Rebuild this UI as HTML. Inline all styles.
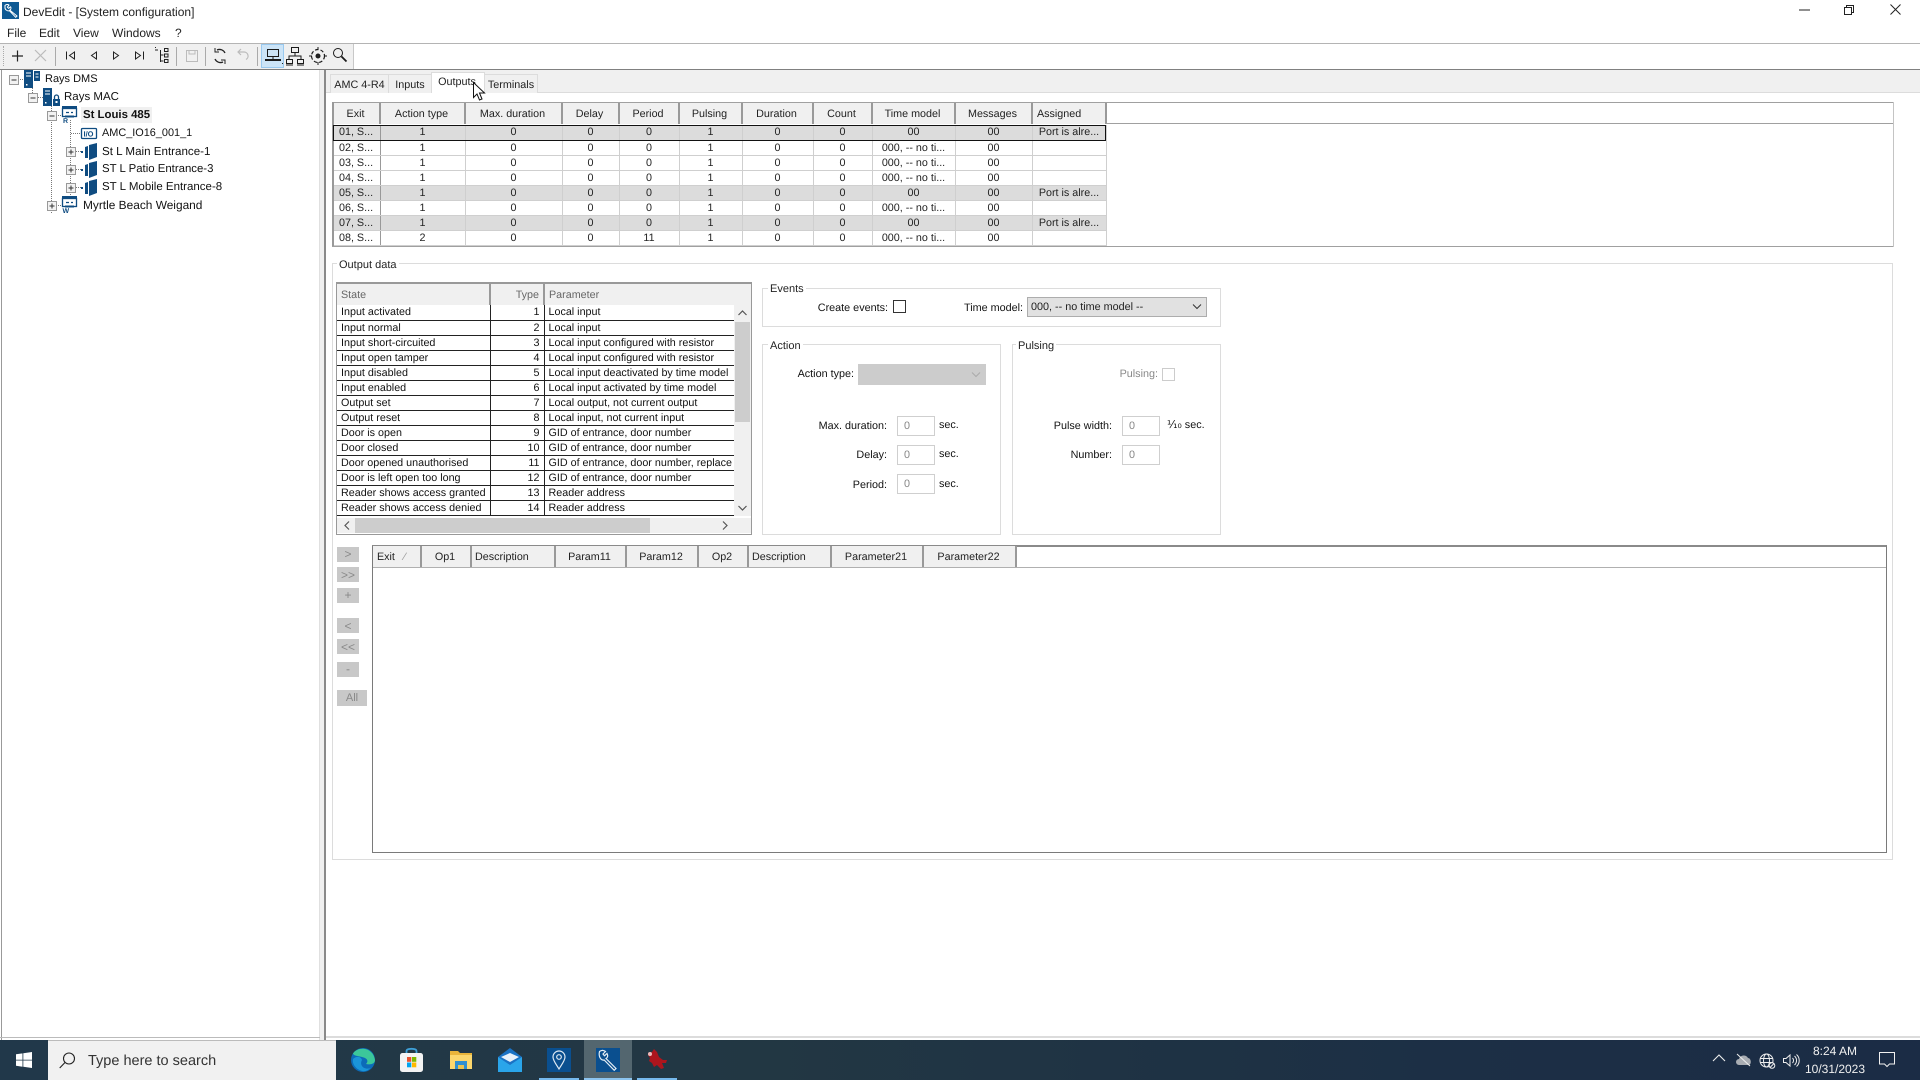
<!DOCTYPE html>
<html><head><meta charset="utf-8"><title>DevEdit</title>
<style>
html,body{margin:0;padding:0;width:1920px;height:1080px;overflow:hidden;background:#fff}
body{position:relative;font-family:"Liberation Sans",sans-serif;font-size:10.8px;color:#111;text-rendering:geometricPrecision}
.a{position:absolute}
.t{position:absolute;white-space:nowrap;line-height:15px}
.r{text-align:right}
svg{position:absolute;overflow:visible}
table{border-collapse:collapse;table-layout:fixed;position:absolute;font-size:10.75px}
td,th{padding:0;overflow:hidden;white-space:nowrap;font-weight:normal;box-sizing:border-box}
#top th{height:21px;background:#f0f0f0;border-right:2px solid #999;text-align:center;color:#222;padding-right:2px}
#top td{height:15px;line-height:14px;text-align:center;border-right:1px solid #cfcfcf;border-bottom:1px solid #cfcfcf;color:#222}
#top tr.g td{background:#dcdcdc}
#top td:first-child{text-align:left;padding-left:5px;border-right:1px solid #999}
#st th{height:21px;background:#f0f0f0;color:#666;text-align:left;padding-left:4px;border-right:2px solid #999}
#st td{height:15px;line-height:14px;border-bottom:1px solid #222;border-right:1px solid #222;padding-left:4px;color:#111}
#st td:nth-child(2){text-align:right;padding:0 4px 0 0}
#bt th{height:21px;background:#f0f0f0;border-right:2px solid #999;text-align:center;color:#222;padding-right:2px}
.gb{position:absolute;border:1px solid #dcdcdc;box-sizing:border-box}
.lg{position:absolute;background:#fff;padding:0 2px;line-height:14px;color:#222;white-space:nowrap}
.inp{position:absolute;width:38px;height:20px;border:1px solid #cfcfcf;box-sizing:border-box;background:#fff;color:#888;line-height:18px;padding-left:6px}
.btn{position:absolute;background:#c8c8c8;color:#888;text-align:center;line-height:15px;font-size:12px}
.tab{position:absolute;top:74px;height:19px;background:#f0f0f0;border:1px solid #dcdcdc;border-bottom:none;box-sizing:border-box;text-align:center;line-height:20px;color:#222}
.tb{color:#111}
</style></head><body>

<!-- title bar -->
<svg style="left:2px;top:2px" width="17" height="17" viewBox="0 0 17 17"><rect width="17" height="17" fill="#0f5a94"/><path d="M3 3.500c1-1.200 3-1.300 4-.4l-1.600 2 1.200 1.200 2-1.500c.7 1.200.4 2.700-.8 3.400L15 14l-1.300 1.300-6.200-6.500c-1.900.5-4.400-1-4.500-3z" fill="none" stroke="#fff" stroke-width="1"/></svg>
<div class="t" style="left:23px;top:4px;font-size:12px;color:#222;line-height:16px">DevEdit - [System configuration]</div>
<svg style="left:1799px;top:9px" width="12" height="2"><rect width="11" height="1" y="0.5" fill="#222"/></svg>
<svg style="left:1844px;top:5px" width="12" height="12" fill="none" stroke="#222"><rect x="0.5" y="2.500" width="7" height="7" fill="#fff"/><path d="M2.500 2.500v-2h7v7h-2"/></svg>
<svg style="left:1890px;top:4px" width="12" height="12" stroke="#222"><path d="M.5.5l10 10M10.500.5l-10 10"/></svg>
<div class="t" style="left:7px;top:26px;font-size:12px;color:#222">File</div>
<div class="t" style="left:39px;top:26px;font-size:12px;color:#222">Edit</div>
<div class="t" style="left:73px;top:26px;font-size:12px;color:#222">View</div>
<div class="t" style="left:112px;top:26px;font-size:12px;color:#222">Windows</div>
<div class="t" style="left:175px;top:26px;font-size:12px;color:#222">?</div>

<!-- toolbar -->
<div class="a" style="left:0;top:43px;width:1920px;height:1px;background:#b4b4b4"></div>
<div class="a" style="left:0;top:44px;width:353px;height:25px;background:#f0f0f0"></div>
<div class="a" style="left:353px;top:44px;width:1px;height:25px;background:#c8c8c8"></div>
<div class="a" style="left:0;top:69px;width:1920px;height:1px;background:#808080"></div>
<div class="a" style="left:3px;top:46px;width:1px;height:20px;border-left:1px dotted #aaa"></div>
<svg style="left:0;top:44px" width="353" height="25" fill="none" stroke="#222" stroke-width="1">
 <path d="M17.500 6.500v11M12 12h11" stroke-width="1.200"/>
 <path d="M35 6l11 11M46 6L35 17" stroke="#bbb" stroke-width="1.200"/>
 <path d="M55.500 3v19" stroke="#aaa"/>
 <path d="M66.500 7.500v8M74.500 8l-5 3.500 5 3.500z" stroke-width="1"/>
 <path d="M96.500 8l-5 3.500 5 3.500z" stroke-width="1"/>
 <path d="M113.500 8l5 3.500-5 3.500z" stroke-width="1"/>
 <path d="M135.500 8l5 3.500-5 3.500zM143.500 7.500v8" stroke-width="1"/>
 <path d="M155 6h3M160.500 6v12M160.500 11h3M160.500 17h3M155 3.500h1" stroke-width="1"/>
 <rect x="164.500" y="4.500" width="3.500" height="3"/><rect x="164.500" y="10" width="3.500" height="3"/><rect x="164.500" y="15.500" width="3.500" height="3"/>
 <path d="M176.500 3v19" stroke="#aaa"/>
 <rect x="186.500" y="6.500" width="11" height="11" stroke="#bbb"/><path d="M189 6.500v3.500h6V6.500" stroke="#bbb"/>
 <path d="M205.500 3v19" stroke="#aaa"/>
 <path d="M225 9a6 6 0 0 0-8-3M215 15a6 6 0 0 0 8 3" stroke-width="1.300"/><path d="M215 4v4h4M225 20v-4h-4" stroke-width="1"/>
 <path d="M238 8h6a4 4 0 0 1 2 7.500M241 5l-3 3 3 3" stroke="#bbb" stroke-width="1.200"/>
 <path d="M257.500 3v19" stroke="#aaa"/>
</svg>
<div class="a" style="left:261px;top:44px;width:23px;height:24px;background:#cce4f7;border:1px solid #99c9ef;box-sizing:border-box"></div>
<svg style="left:262px;top:44px" width="92" height="25" fill="none" stroke="#1a1a1a">
 <rect x="5.500" y="5.500" width="11" height="7" stroke-width="1"/><path d="M11 13v2M3.500 15.500h15v1h-15z" fill="#222" stroke-width="1"/><rect x="20" y="19" width="1" height="1" fill="#222" stroke="none"/>
 <rect x="29.500" y="3.500" width="7" height="5" stroke-width="1"/><path d="M33 9v3M27 15v-3h12v3"/><rect x="24.500" y="15.500" width="6" height="4" stroke-width="1"/><rect x="35.500" y="15.500" width="6" height="4" stroke-width="1"/><path d="M24 21h7M35 21h7" stroke-width="1"/>
 <circle cx="56" cy="12" r="6.500" stroke-dasharray="3.500 2" stroke-width="1.200"/><circle cx="56" cy="12" r="2" fill="#222"/><path d="M56 3v3M56 18v3M47 12h3M62 12h3" stroke-width="1"/>
 <circle cx="76" cy="9" r="4.500" stroke-width="1"/><path d="M79.500 12.500l5 5" stroke-width="1.800"/>
</svg>

<!-- tree -->
<div class="a" style="left:319px;top:70px;width:1px;height:970px;background:#e0e0e0"></div>
<div class="a" style="left:320px;top:70px;width:4px;height:970px;background:#f0f0f0"></div>
<div class="a" style="left:324px;top:70px;width:2px;height:970px;background:#8a8a8a"></div>
<div class="a" style="left:1px;top:70px;width:1px;height:970px;background:#999"></div>
<svg style="left:0;top:70px" width="320" height="150" fill="none">
 <g stroke="#777" stroke-dasharray="1 1">
  <path d="M18 9.500h7M32.500 16v12M38 27.500h6M51.500 32v112M58 45.500h6M70.500 50v77M71 63.500h12M72 81.500h10M72 99.500h10M72 117.500h10M58 135.500h6"/>
 </g>
 <g stroke="#999" fill="#f2f2f2">
  <rect x="9.500" y="5.500" width="9" height="9"/><rect x="28.500" y="23.500" width="9" height="9"/><rect x="47.500" y="41.500" width="9" height="9"/>
  <rect x="66.500" y="77.500" width="9" height="9"/><rect x="66.500" y="95.500" width="9" height="9"/><rect x="66.500" y="113.500" width="9" height="9"/><rect x="47.500" y="131.500" width="9" height="9"/>
 </g>
 <g stroke="#333">
  <path d="M11.500 10h5M30.500 28h5M49.500 46h5M68.500 82h5M71 79.500v5M68.500 100h5M71 97.500v5M68.500 118h5M71 115.500v5M49.500 136h5M52 133.500v5"/>
 </g>
 <!-- Rays DMS -->
 <rect x="24" y="0" width="9" height="18" fill="#0f4c81"/><rect x="34" y="1" width="6" height="10" fill="#0f4c81"/>
 <path d="M26 3h5M26 6h5M35.500 4h3M35.500 7h3" stroke="#fff"/><rect x="26" y="14" width="1.500" height="1.500" fill="#fff"/>
 <!-- Rays MAC -->
 <rect x="43" y="18" width="9" height="18" fill="#0f4c81"/><path d="M45 21h5M45 24h5" stroke="#fff"/><rect x="45" y="32" width="1.500" height="1.500" fill="#fff"/>
 <rect x="53" y="29" width="7" height="7" fill="#0f4c81"/><path d="M54.500 29v-2a2 2 0 0 1 4 0v2" stroke="#0f4c81" stroke-width="1.300"/><rect x="55.500" y="31" width="2" height="2" fill="#fff"/>
 <!-- St Louis -->
 <rect x="62.500" y="38.500" width="14" height="8" stroke="#0f4c81" stroke-width="1.300"/><path d="M66 42.500h3M71 42.500h2" stroke="#0f4c81" stroke-width="1.300"/><path d="M62 37h15" stroke="#0f4c81" stroke-width="2"/><path d="M65 46.500h9" stroke="#0f4c81" stroke-width="2"/>
 <text x="63" y="53" font-family="Liberation Sans" font-size="7" font-weight="bold" fill="#0f4c81">R</text>
 <!-- IO -->
 <rect x="81.500" y="58.500" width="15" height="10" rx="1" stroke="#0f4c81" stroke-width="1.300"/>
 <text x="83.500" y="66.500" font-family="Liberation Sans" font-size="7.500" font-weight="bold" fill="#0f4c81">I/O</text>
 <!-- doors -->
 <g fill="#0f4c81"><path d="M85 77l3-1v12l-3 0zM89 75l8-2v14l-8 3z"/><rect x="81" y="81" width="2" height="2"/>
 <path d="M85 95l3-1v12l-3 0zM89 93l8-2v14l-8 3z"/><rect x="81" y="99" width="2" height="2"/>
 <path d="M85 113l3-1v12l-3 0zM89 111l8-2v14l-8 3z"/><rect x="81" y="117" width="2" height="2"/></g>
 <!-- Myrtle -->
 <rect x="62.500" y="128.500" width="14" height="8" stroke="#0f4c81" stroke-width="1.300"/><path d="M66 132.500h3M71 132.500h2" stroke="#0f4c81" stroke-width="1.300"/><path d="M62 127h15" stroke="#0f4c81" stroke-width="2"/><path d="M65 136.500h9" stroke="#0f4c81" stroke-width="2"/>
 <text x="62.500" y="143" font-family="Liberation Sans" font-size="7" font-weight="bold" fill="#0f4c81">W</text>
</svg>
<div class="a" style="left:81px;top:107px;width:71px;height:16px;background:#f0f0f0"></div>
<div class="t tb" style="left:45px;top:72px;font-size:11px">Rays DMS</div>
<div class="t tb" style="left:64px;top:90px;font-size:11.500px">Rays MAC</div>
<div class="t tb" style="left:83px;top:108px;font-size:11.400px;font-weight:bold">St Louis 485</div>
<div class="t tb" style="left:102px;top:126px;font-size:10.900px">AMC_IO16_001_1</div>
<div class="t tb" style="left:102px;top:144px;font-size:11.600px">St L Main Entrance-1</div>
<div class="t tb" style="left:102px;top:162px;font-size:11.400px">ST L Patio Entrance-3</div>
<div class="t tb" style="left:102px;top:180px;font-size:11.500px">ST L Mobile Entrance-8</div>
<div class="t tb" style="left:83px;top:198px;font-size:11.900px">Myrtle Beach Weigand</div>

<!-- right panel -->
<div class="a" style="left:326px;top:70px;width:1594px;height:23px;background:#f0f0f0"></div>
<div class="a" style="left:326px;top:92px;width:1594px;height:1px;background:#dcdcdc"></div>
<div class="a" style="left:326px;top:1036px;width:1594px;height:2px;background:#dcdcdc"></div>
<div class="a" style="left:0;top:1037px;width:320px;height:1px;background:#bbb"></div>
<div class="tab" style="left:330px;width:59px">AMC 4-R4</div>
<div class="tab" style="left:388px;width:44px">Inputs</div>
<div class="tab" style="left:484px;width:54px">Terminals</div>
<div class="tab" style="left:431px;top:72px;width:54px;height:21px;background:#fff;line-height:19px;padding-right:2px">Outputs</div>

<!-- top table -->
<div class="a" style="left:332px;top:102px;width:1561px;height:1px;background:#a0a0a0"></div>
<div class="a" style="left:332px;top:102px;width:2px;height:145px;background:#999"></div>
<div class="a" style="left:332px;top:246px;width:1562px;height:1px;background:#a0a0a0"></div>
<div class="a" style="left:1893px;top:102px;width:1px;height:145px;background:#c4c4c4"></div>
<div class="a" style="left:1105px;top:123px;width:788px;height:1px;background:#a0a0a0"></div>
<table id="top" style="left:334px;top:103px;width:772px">
<colgroup><col style="width:46px"><col style="width:85px"><col style="width:97px"><col style="width:57px"><col style="width:60px"><col style="width:63px"><col style="width:71px"><col style="width:59px"><col style="width:83px"><col style="width:77px"><col style="width:74px"></colgroup>
<tr><th>Exit</th><th>Action type</th><th>Max. duration</th><th>Delay</th><th>Period</th><th>Pulsing</th><th>Duration</th><th>Count</th><th>Time model</th><th>Messages</th><th style="text-align:left;padding-left:4px">Assigned</th></tr>
<tr style="height:1px"><td colspan="11" style="height:1px;border:none;font-size:0;line-height:0"></td></tr>
<tr class="g"><td>01, S...</td><td>1</td><td>0</td><td>0</td><td>0</td><td>1</td><td>0</td><td>0</td><td>00</td><td>00</td><td>Port is alre...</td></tr>
<tr><td>02, S...</td><td>1</td><td>0</td><td>0</td><td>0</td><td>1</td><td>0</td><td>0</td><td>000, -- no ti...</td><td>00</td><td></td></tr>
<tr><td>03, S...</td><td>1</td><td>0</td><td>0</td><td>0</td><td>1</td><td>0</td><td>0</td><td>000, -- no ti...</td><td>00</td><td></td></tr>
<tr><td>04, S...</td><td>1</td><td>0</td><td>0</td><td>0</td><td>1</td><td>0</td><td>0</td><td>000, -- no ti...</td><td>00</td><td></td></tr>
<tr class="g"><td>05, S...</td><td>1</td><td>0</td><td>0</td><td>0</td><td>1</td><td>0</td><td>0</td><td>00</td><td>00</td><td>Port is alre...</td></tr>
<tr><td>06, S...</td><td>1</td><td>0</td><td>0</td><td>0</td><td>1</td><td>0</td><td>0</td><td>000, -- no ti...</td><td>00</td><td></td></tr>
<tr class="g"><td>07, S...</td><td>1</td><td>0</td><td>0</td><td>0</td><td>1</td><td>0</td><td>0</td><td>00</td><td>00</td><td>Port is alre...</td></tr>
<tr><td>08, S...</td><td>2</td><td>0</td><td>0</td><td>11</td><td>1</td><td>0</td><td>0</td><td>000, -- no ti...</td><td>00</td><td></td></tr>
</table>
<div class="a" style="left:333px;top:125px;width:771px;height:14px;border:1px solid #111"></div>

<!-- Output data group -->
<div class="gb" style="left:332px;top:263px;width:1561px;height:597px"></div>
<div class="lg" style="left:337px;top:258px;font-size:11px">Output data</div>

<!-- state table -->
<div class="a" style="left:336px;top:282px;width:416px;height:253px;border:1px solid #999;box-sizing:border-box;border-top:2px solid #999;overflow:hidden;background:#fff">
<table id="st" style="left:0;top:0;width:464px">
<colgroup><col style="width:153px"><col style="width:54px"><col style="width:257px"></colgroup>
<tr><th>State</th><th style="text-align:right;padding:0 4px 0 0">Type</th><th style="border-right:none">Parameter</th></tr>
<tr><td>Input activated</td><td>1</td><td>Local input</td></tr>
<tr><td>Input normal</td><td>2</td><td>Local input</td></tr>
<tr><td>Input short-circuited</td><td>3</td><td>Local input configured with resistor</td></tr>
<tr><td>Input open tamper</td><td>4</td><td>Local input configured with resistor</td></tr>
<tr><td>Input disabled</td><td>5</td><td>Local input deactivated by time model</td></tr>
<tr><td>Input enabled</td><td>6</td><td>Local input activated by time model</td></tr>
<tr><td>Output set</td><td>7</td><td>Local output, not current output</td></tr>
<tr><td>Output reset</td><td>8</td><td>Local input, not current input</td></tr>
<tr><td>Door is open</td><td>9</td><td>GID of entrance, door number</td></tr>
<tr><td>Door closed</td><td>10</td><td>GID of entrance, door number</td></tr>
<tr><td>Door opened unauthorised</td><td>11</td><td>GID of entrance, door number, replace</td></tr>
<tr><td>Door is left open too long</td><td>12</td><td>GID of entrance, door number</td></tr>
<tr><td>Reader shows access granted</td><td>13</td><td>Reader address</td></tr>
<tr><td>Reader shows access denied</td><td>14</td><td>Reader address</td></tr>
</table>
<div class="a" style="left:397px;top:21px;width:17px;height:211px;background:#f0f0f0"></div>
<div class="a" style="left:398px;top:38px;width:15px;height:100px;background:#cdcdcd"></div>
<div class="a" style="left:0;top:232px;width:414px;height:3px;background:#fff"></div>
<div class="a" style="left:0;top:234px;width:414px;height:15px;background:#f0f0f0"></div>
<div class="a" style="left:18px;top:234px;width:295px;height:15px;background:#cdcdcd"></div>
<svg style="left:0;top:0" width="414" height="249" fill="none" stroke="#555" stroke-width="1.200"><path d="M401.500 31l4-4 4 4M401.500 222l4 4 4-4M12 237.500l-4 4 4 4M386 237.500l4 4-4 4"/></svg>
</div>

<!-- Events -->
<div class="gb" style="left:762px;top:288px;width:459px;height:39px"></div>
<div class="lg" style="left:768px;top:282px;font-size:11px">Events</div>
<div class="t r" style="left:788px;width:100px;top:301px">Create events:</div>
<div class="a" style="left:893px;top:300px;width:13px;height:13px;border:1px solid #333;box-sizing:border-box;background:#fff"></div>
<div class="t r" style="left:923px;width:100px;top:301px">Time model:</div>
<div class="a" style="left:1027px;top:297px;width:180px;height:20px;background:#e1e1e1;border:1px solid #adadad;box-sizing:border-box;line-height:18px;padding-left:3px;color:#222">000, -- no time model --</div>
<svg style="left:1192px;top:304px" width="10" height="6" fill="none" stroke="#333"><path d="M1 .5l4 4 4-4"/></svg>

<!-- Action -->
<div class="gb" style="left:762px;top:344px;width:239px;height:191px"></div>
<div class="lg" style="left:768px;top:339px;font-size:11px">Action</div>
<div class="t r" style="left:754px;width:100px;top:367px">Action type:</div>
<div class="a" style="left:858px;top:364px;width:128px;height:21px;background:#cccccc"></div>
<svg style="left:971px;top:372px" width="10" height="6" fill="none" stroke="#aaa"><path d="M1 .5l4 4 4-4"/></svg>
<div class="t r" style="left:787px;width:100px;top:419px">Max. duration:</div>
<div class="inp" style="left:897px;top:416px">0</div><div class="t" style="left:939px;top:418px">sec.</div>
<div class="t r" style="left:787px;width:100px;top:448px">Delay:</div>
<div class="inp" style="left:897px;top:445px">0</div><div class="t" style="left:939px;top:447px">sec.</div>
<div class="t r" style="left:787px;width:100px;top:478px">Period:</div>
<div class="inp" style="left:897px;top:474px">0</div><div class="t" style="left:939px;top:477px">sec.</div>

<!-- Pulsing -->
<div class="gb" style="left:1012px;top:344px;width:209px;height:191px"></div>
<div class="lg" style="left:1016px;top:339px;font-size:11px">Pulsing</div>
<div class="t r" style="left:1058px;width:100px;top:367px;color:#888">Pulsing:</div>
<div class="a" style="left:1162px;top:368px;width:13px;height:13px;border:1px solid #ccc;box-sizing:border-box"></div>
<div class="t r" style="left:1012px;width:100px;top:419px">Pulse width:</div>
<div class="inp" style="left:1122px;top:416px">0</div><div class="t" style="left:1167px;top:418px">⅒ sec.</div>
<div class="t r" style="left:1012px;width:100px;top:448px">Number:</div>
<div class="inp" style="left:1122px;top:445px">0</div>

<!-- side buttons -->
<div class="btn" style="left:337px;top:547px;width:22px;height:15px">&gt;</div>
<div class="btn" style="left:337px;top:567px;width:22px;height:15px;line-height:17px">&gt;&gt;</div>
<div class="btn" style="left:337px;top:588px;width:22px;height:15px">+</div>
<div class="btn" style="left:337px;top:618px;width:22px;height:15px;line-height:17px">&lt;</div>
<div class="btn" style="left:337px;top:639px;width:22px;height:15px;line-height:17px">&lt;&lt;</div>
<div class="btn" style="left:337px;top:662px;width:22px;height:15px">-</div>
<div class="btn" style="left:337px;top:690px;width:30px;height:16px;line-height:17px;font-size:11px">All</div>

<!-- bottom table -->
<div class="a" style="left:372px;top:545px;width:1515px;height:308px;border:1px solid #7a7a7a;border-top:2px solid #8a8a8a;box-sizing:border-box;background:#fff"></div>
<div class="a" style="left:373px;top:567px;width:1513px;height:1px;background:#b0b0b0"></div>
<table id="bt" style="left:373px;top:546px;width:643px">
<colgroup><col style="width:48px"><col style="width:50px"><col style="width:84px"><col style="width:71px"><col style="width:72px"><col style="width:50px"><col style="width:83px"><col style="width:92px"><col style="width:93px"></colgroup>
<tr><th style="text-align:left;padding-left:4px">Exit <span style="color:#999;margin-left:6px">⁄</span></th><th>Op1</th><th style="text-align:left;padding-left:3px">Description</th><th>Param11</th><th>Param12</th><th>Op2</th><th style="text-align:left;padding-left:3px">Description</th><th>Parameter21</th><th>Parameter22</th></tr>
</table>

<!-- cursor -->
<svg style="left:473px;top:82px" width="14" height="20"><path d="M.5.500v15l3.500-3.500 2.500 6 2.500-1-2.500-6h5z" fill="#fff" stroke="#111"/></svg>

<!-- taskbar -->
<div class="a" style="left:0;top:1040px;width:1920px;height:40px;background:linear-gradient(90deg,#21384a,#223743 40%,#1c2f45 75%,#1b2c45)"></div>
<div class="a" style="left:48px;top:1040px;width:288px;height:40px;background:#f1f1f1;box-shadow:inset 0 1px 0 #bbb"></div>
<svg style="left:16px;top:1052px" width="16" height="16" fill="#fff"><path d="M0 2.300l6.500-.9v6.300H0zM7.300 1.300L16 0v7.700H7.300zM0 8.500h6.500v6.200L0 13.800zM7.300 8.500H16V16l-8.700-1.200z"/></svg>
<svg style="left:59px;top:1052px" width="17" height="17" fill="none" stroke="#222" stroke-width="1.100"><circle cx="10" cy="6.500" r="5.500"/><path d="M6 10.500L.7 16"/></svg>
<div class="t" style="left:88px;top:1053px;font-size:14.500px;color:#333;line-height:17px">Type here to search</div>
<div class="a" style="left:584px;top:1040px;width:48px;height:40px;background:#53666f"></div>
<div class="a" style="left:539px;top:1078px;width:40px;height:2px;background:#76b9ed"></div>
<div class="a" style="left:584px;top:1078px;width:48px;height:2px;background:#8cc4ef"></div>
<div class="a" style="left:637px;top:1078px;width:40px;height:2px;background:#76b9ed"></div>
<!-- edge -->
<svg style="left:351px;top:1048px" width="24" height="24"><circle cx="12" cy="12" r="12" fill="#0c6bb8"/><path d="M2 5.500C7-2 22-1 24 12c0 4-5 5-9 4 2-2 2-4.500-1-6C10 8 3 8.500 2 5.500z" fill="#3cc79a"/><path d="M11 12c-3 5 2 10.500 8.500 8-3 3-6.500 4-10 2.500C4.500 20.500 1 16 2 11c3-3 8-3 9 1z" fill="#1b95d8"/></svg>
<!-- store -->
<svg style="left:400px;top:1048px" width="23" height="24"><path d="M6.500 7V3C6.500 1.500 8 .8 11.500.8S16.500 1.500 16.500 3V7" fill="none" stroke="#3ea0d8" stroke-width="1.800"/><rect x="0" y="5" width="23" height="19" rx="2.500" fill="#f3f3f3"/><rect x="7" y="9" width="4.300" height="4.800" fill="#e8522f"/><rect x="12" y="9" width="4.300" height="4.800" fill="#7eb900"/><rect x="7" y="14.500" width="4.300" height="4.800" fill="#00a4ef"/><rect x="12" y="14.500" width="4.300" height="4.800" fill="#ffb900"/></svg>
<!-- folder -->
<svg style="left:450px;top:1050px" width="22" height="19"><path d="M0 1h8l2 2h12v16H0z" fill="#e9b43b"/><path d="M0 5h22v14H0z" fill="#fbd66d"/><path d="M5 11h12v8h-3v-4H8v4H5z" fill="#2f8fd0"/><path d="M8 15h6v4H8z" fill="#e9c24f"/></svg>
<!-- mail -->
<svg style="left:498px;top:1048px" width="24" height="24"><path d="M0 9L12 0l12 9v15H0z" fill="#1a72c4"/><path d="M3 9l9-4 9 4-9 5z" fill="#e8f1fa"/><path d="M0 9l12 8 12-8v15H0z" fill="#2aa5ea"/></svg>
<!-- map -->
<svg style="left:547px;top:1048px" width="24" height="24"><rect width="24" height="24" fill="#0a4f8f"/><path d="M12 21c-3-5-6-8.500-6-12a6 6 0 0 1 12 0c0 3.500-3 7-6 12z" fill="none" stroke="#dfeaf3" stroke-width="1.200"/><circle cx="12" cy="9" r="2.300" fill="none" stroke="#dfeaf3" stroke-width="1.200"/></svg>
<!-- tools -->
<svg style="left:596px;top:1048px" width="24" height="24"><rect width="24" height="24" fill="#0a4f8f"/><path d="M3.500 3.500c2-1.500 4-1.500 6 0l-2.500 2.500 1.500 1.800L11 5.500c1.200 2 .8 4-1 5l10 10-1.800 1.800-10-10.300c-3 .8-6-3-4.700-8.500z" fill="none" stroke="#e5eef5" stroke-width="1.200"/></svg>
<!-- red -->
<svg style="left:645px;top:1049px" width="24" height="24"><path d="M3 4l4-1 2-3 3 3 2 5 4 3 4 0-1 3-4 0 2 5-3 1-4-4-3 2-2-4-3-2 1-3-2-3z" fill="#ad151d"/><circle cx="5" cy="5" r="2" fill="#e9b9b9"/></svg>

<!-- tray -->
<svg style="left:1712px;top:1054px" width="14" height="8" fill="none" stroke="#eee" stroke-width="1.100"><path d="M1 7l6-6 6 6"/></svg>
<svg style="left:1736px;top:1053px" width="16" height="14"><path d="M3 12a3 3 0 0 1 0-6c1-4 7-5 9-1 3 0 4 6 1 7z" fill="#a9adb3"/><path d="M1 1l13 12" stroke="#eee"/></svg>
<svg style="left:1759px;top:1053px" width="17" height="16" fill="none" stroke="#eee"><circle cx="7.500" cy="7.500" r="6.500"/><ellipse cx="7.500" cy="7.500" rx="3" ry="6.500"/><path d="M1 5.500h13M1 9.500h13"/><circle cx="13" cy="12.500" r="2.800" fill="#1b2c45"/><path d="M11 14.500l4-4"/></svg>
<svg style="left:1783px;top:1054px" width="16" height="13" fill="none" stroke="#eee"><path d="M.5 4.500h2.500l4-3.500v11l-4-3.500H.5z"/><path d="M9.500 4a3.500 3.500 0 0 1 0 5M11.500 2a6 6 0 0 1 0 9M13.500.5a8 8 0 0 1 0 12"/></svg>
<div class="t" style="left:1795px;width:80px;top:1043px;text-align:center;color:#f0f0f0;font-size:12px;line-height:16px">8:24 AM</div>
<div class="t" style="left:1795px;width:80px;top:1061px;text-align:center;color:#f0f0f0;font-size:12px;line-height:16px">10/31/2023</div>
<svg style="left:1879px;top:1052px" width="17" height="16" fill="none" stroke="#f0f0f0"><path d="M.5.500h15v11.500h-5l-2.500 2.500-2.500-2.500h-5z"/></svg>
</body></html>
